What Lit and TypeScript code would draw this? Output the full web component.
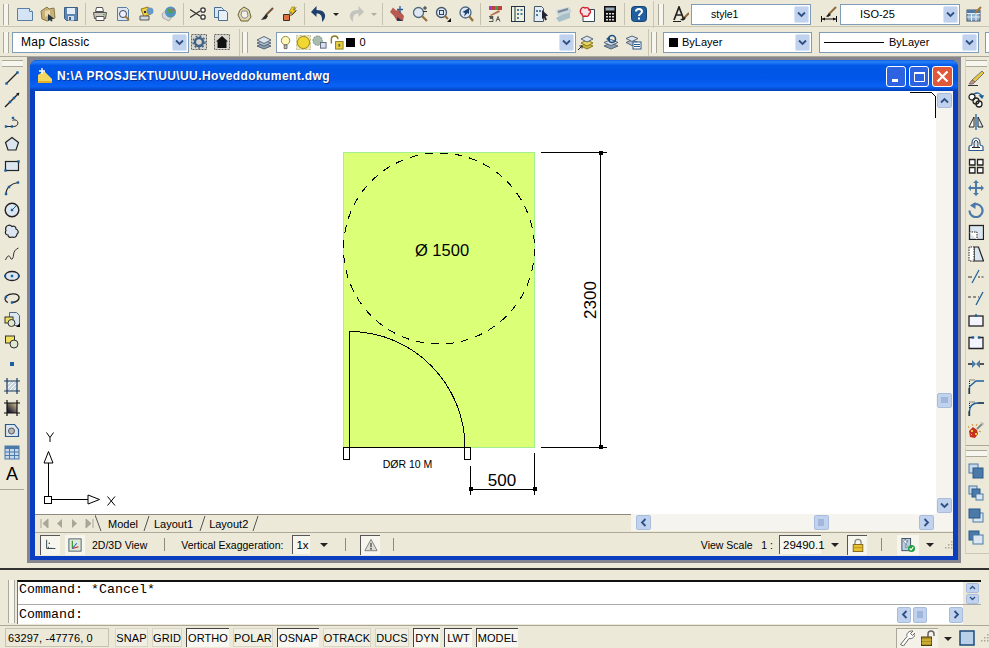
import { LitElement, html, css, svg } from "lit";
import { customElement } from "lit/decorators.js";

const D = "#1a5f9e";
const K = "#222";
const S = "#4b7aa8";
const dot = (x: number, y: number) => svg`<rect x=${x - 1.2} y=${y - 1.2} width="2.4" height="2.4" fill=${D} />`;

const icons: Record<string, any> = {
  // standard toolbar
  new: svg`<path d="M0.5 2.5h12l3 3v9h-15z" fill="#d5e4f4" stroke="#5a7fa5"/><path d="M12.5 2.500v3h3" fill="#fff" stroke="#5a7fa5"/>`,
  open: svg`<path d="M1 5l6-4 2 2 5-1 1 10-8 3-5-2z" fill="#c9b078" stroke="#8a7a4a"/><path d="M5 5l5-1v5l-5 2z" fill="#e8d9a8"/><path d="M8 8l6 4.500-2.500.5 1 2-1.500.5-1-2-2 1.500z" fill="#234"/>`,
  save: svg`<path d="M1.500 1.500h13v13h-11l-2-2z" fill="#5d86b5" stroke="#3c5f88"/><rect x="4" y="2" width="8" height="6" fill="#e4ecf5"/><rect x="5" y="10" width="6" height="4.500" fill="#d5dde8"/><rect x="6" y="11" width="2" height="3" fill="#3c5f88"/>`,
  print: svg`<path d="M4.500 1.500h6l1 4h-8z" fill="#fff" stroke="#555"/><path d="M1.500 6.500h13l-1 6h-11z" fill="#c8c8c0" stroke="#555"/><path d="M4 10.500h8v4H4z" fill="#fff" stroke="#555"/><circle cx="12" cy="8.500" r=".8" fill="#3a3"/>`,
  preview: svg`<path d="M2.500 1.500h9l2 2v11h-11z" fill="#dbe6f2" stroke="#5a7fa5"/><circle cx="8" cy="8" r="3.500" fill="#eef" stroke="#445"/><path d="M10.500 10.500l3.500 3.500" stroke="#a07a30" stroke-width="2"/>`,
  publish: svg`<path d="M3 3l7-2 3 7-7 3z" fill="#f0d040" stroke="#987a10"/><circle cx="12" cy="5" r="3.500" fill="#6a98c8"/><path d="M2 10h9v4H2z" fill="#d0d8e0" stroke="#555"/><rect x="6" y="5" width="2" height="2" fill="#333"/>`,
  web: svg`<path d="M1 8l7-6 6 4-6 9-6-3z" fill="#d8d8d8" stroke="#aaa"/><circle cx="9.500" cy="6" r="5.500" fill="#4f94c4"/><path d="M7 2.500l4 1 1 3-3 1-2-2zM8 9l2 1-1 1.500z" fill="#5aa04a"/><path d="M11 3l3 1.500" stroke="#d05030"/>`,
  cut: svg`<path d="M0 3.500l10 6.500M0 11.500L10 5" stroke="#333" stroke-width="1.300"/><circle cx="13" cy="4" r="2.200" fill="#fff" stroke="#333" stroke-width="1.300"/><circle cx="13" cy="11" r="2.200" fill="#fff" stroke="#333" stroke-width="1.300"/>`,
  copyc: svg`<path d="M1.500 1.500h7l2 2v8h-9z" fill="#dbe6f2" stroke="#4a6f95"/><path d="M5.500 4.500h7l2 2v8h-9z" fill="#e8eff7" stroke="#4a6f95"/>`,
  paste: svg`<path d="M8 1l5 3 2 7-3 4H5L2 9 4 4z" fill="#e0d8a8" stroke="#6a6238"/><path d="M6 5h5l1 5-2 2H7L5 9z" fill="#f3f1e2" stroke="#88a"/>`,
  brush: svg`<path d="M14 2L7 9" stroke="#70543a" stroke-width="2"/><path d="M7 8l2 2-2 3-5 1z" fill="#2a2a2a"/>`,
  match: svg`<path d="M1.500 8.500h6v6h-6z" fill="#e07040" stroke="#333"/><path d="M7 8.500l7-7M9.500 9.500l5-5" stroke="#444"/><path d="M10 1L7 6h3L8 10l6-6h-3l2-3z" fill="#f2d020" stroke="#8a7010" stroke-width=".6"/>`,
  undo: svg`<path d="M5.500 0L0 6l5.500 5V7.500c4 0 6 2 5.500 8.500 4-3 6-12-5.500-12z" fill="#1e3f6e"/>`,
  redo: svg`<path d="M10.500 0L16 6l-5.500 5V7.500c-4 0-6 2-5.500 8.500-4-3-6-12 5.500-12z" fill="#c4c4be"/>`,
  pan: svg`<path d="M1 6l4 4 3 5h6l1-5-5-6-3 .5-3-3z" fill="#b85a50"/><path d="M8 11l6 4H8z" fill="#203a5a"/><path d="M11 0v7M8 3.500h6" stroke="#2b5f94" stroke-width="1.300"/>`,
  zoomrt: svg`<circle cx="6.500" cy="6.500" r="5" fill="#dfe8f2" stroke="#506a80" stroke-width="1.300"/><path d="M10 10l5 5" stroke="#94703a" stroke-width="2.200"/><path d="M13 0v4M11 2h4M11 5.500h4" stroke="#333"/>`,
  zoomwin: svg`<circle cx="6.500" cy="6.500" r="5" fill="#dfe8f2" stroke="#456" stroke-width="1.300"/><rect x="4.500" y="4.500" width="4" height="4" fill="none" stroke="#246"/><path d="M10 10l3 3" stroke="#94703a" stroke-width="2.200"/><path d="M12 16h4v-4z" fill="#111"/>`,
  zoomprev: svg`<circle cx="7.500" cy="6.500" r="5.500" fill="#dfe8f2" stroke="#506a80" stroke-width="1.300"/><path d="M11 10l4 5" stroke="#94703a" stroke-width="2.200"/><path d="M11 2L4.500 6l2.500 1-1 3.500L9.500 7l1.500 1z" fill="#1f4270"/>`,
  props: svg`<rect x="2" y="0" width="13" height="4" fill="#c04040"/><rect x="2" y="0" width="3" height="4" fill="#a040c0"/><rect x="8" y="0" width="3" height="4" fill="#40a040"/><path d="M3 9l9-5 1 2-9 4z" fill="#b57050"/><path d="M2 10.500h4v1H3v1h3v3H2M9 15.500l2-5 2 5M10 13.500h2" fill="none" stroke="#333" stroke-width=".8"/>`,
  design: svg`<rect x="1.500" y="0.500" width="13" height="15" fill="#eef2e0" stroke="#234"/><path d="M5 0.500v15" stroke="#234"/><path d="M7 3h2v2H7zM10.500 3h2v2h-2zM7 7h2v2H7zM10.500 7h2v2h-2zM7 11h2v2H7z" fill="#5a7a9a"/>`,
  palette: svg`<path d="M1.500 0.500h7l2 2v13h-9.500z" fill="#e4ecf5" stroke="#456"/><path d="M3 4h2v2H3zM6 4h2v2H6zM3 8h2v2H3z" fill="#5a7a9a"/><path d="M9 4l6 5.500-2.500 1 1.500 3-2 1-1-3-2 1.500z" fill="#223"/>`,
  sheet: svg`<path d="M0 12l14-8v8L3 16z" fill="#a8c0c8"/><path d="M0 4l13-3 3 5L2 10z" fill="#c8d6dc"/><path d="M2 6l10-3" stroke="#789" stroke-width="2"/>`,
  markup: svg`<path d="M4 3.500h11.500v12H4z" fill="#fff" stroke="#345"/><path d="M2 3c1-2 3-2 4-1 2-1 4 0 4 2 2 0 2 3 0 4 0 2-2 3-4 2-1 1-3 0-3-2-2 0-2-4-1-5z" fill="#f6e2e2" stroke="#d02030" stroke-width="1.400"/>`,
  calc: svg`<rect x="2" y="0" width="12" height="16" fill="#111"/><rect x="3.500" y="1.500" width="9" height="3" fill="#9ab"/><path d="M4 7h2v1.500H4zM7 7h2v1.500H7zM10 7h2v1.500h-2zM4 10h2v1.500H4zM7 10h2v1.500H7zM10 10h2v1.500h-2zM4 13h2v1.500H4zM7 13h2v1.500H7zM10 13h2v1.500h-2z" fill="#ddd"/>`,
  help: svg`<rect x="0.500" y="0.500" width="15" height="15" rx="3" fill="#1f5f9f" stroke="#154070"/><path d="M5 5.500c0-3.500 6-3.500 6 0 0 2-3 2-3 4.500" fill="none" stroke="#fff" stroke-width="2"/><rect x="7" y="11.500" width="2" height="2" fill="#fff"/>`,
  textstyle: svg`<path d="M1 14L6 1l5 13M3 9h6" fill="none" stroke="#222" stroke-width="1.700"/><path d="M16 7l-5 5" stroke="#90683a" stroke-width="2"/><path d="M11 11l2 1-3 2.500-3-.5z" fill="#222"/><path d="M0 15.500h8" stroke="#222"/>`,
  dimstyle: svg`<path d="M.5 10v6M15.500 10v6M1 13h14" stroke="#111"/><path d="M1 13l3-1.500v3zM15 13l-3-1.500v3z" fill="#111"/><path d="M15 1L8 8" stroke="#90683a" stroke-width="2"/><path d="M8 7l2 2-3 2-2-.5z" fill="#222"/>`,
  tablestyle: svg`<rect x="1" y="4" width="13" height="11" fill="#8fb0d0" stroke="#456"/><path d="M1 7.500h13M1 11h13M5.500 4v11M10 4v11" stroke="#e8eff7"/><rect x="1" y="4" width="13" height="3" fill="#4a78a8"/><path d="M15 1L9 7" stroke="#a87a3a" stroke-width="2"/>`,
  // row 2
  wsgear: svg`<rect x="0.500" y="0.500" width="15" height="15" fill="#d8d8d0" stroke="#666" stroke-dasharray="2 1"/><circle cx="8" cy="8" r="4" fill="none" stroke="#3f5f85" stroke-width="2.400"/><circle cx="8" cy="8" r="6" fill="none" stroke="#3f5f85" stroke-width="1.400" stroke-dasharray="2 2"/>`,
  wshome: svg`<rect x="0.500" y="0.500" width="15" height="15" fill="#d8d8d0" stroke="#666" stroke-dasharray="2 1"/><path d="M8 2l6 5.500h-1.500V14h-9V7.500H2z" fill="#111"/>`,
  layers: svg`<path d="M8 9l7 3-7 3-7-3z" fill="#8a9ab0" stroke="#567"/><path d="M8 6l7 3-7 3-7-3z" fill="#b0bfd0" stroke="#567"/><path d="M8 2.500l7 3.500-7 3.500L1 6z" fill="#dce4ee" stroke="#567"/>`,
  bulb: svg`<circle cx="7" cy="6" r="4.500" fill="#fff8b8" stroke="#8a8040"/><path d="M5.500 10.500h3v4h-3z" fill="#bbb" stroke="#666"/>`,
  sun: svg`<rect x="0" y="0" width="16" height="16" fill="#e6e6c0" stroke="#a0a080" stroke-dasharray="2 2"/><circle cx="8" cy="8" r="6.500" fill="#f0d830" stroke="#987a10"/>`,
  plotlayer: svg`<circle cx="6" cy="6" r="5" fill="#aabbb0" stroke="#6a8a7a" stroke-dasharray="2 1"/><rect x="9" y="8" width="6" height="6" fill="#dde" stroke="#567"/>`,
  padlock: svg`<path d="M2.500 9V4.500a3.500 3.500 0 0 1 7 0" fill="none" stroke="#8a7a1a" stroke-width="1.500"/><rect x="7" y="7" width="8" height="8" fill="#e8d040" stroke="#8a7a1a"/><rect x="10" y="9.500" width="2" height="3" fill="#665"/>`,
  laycur: svg`<path d="M9 9l6 3-6 3-6-3z" fill="#c8b840" stroke="#887820"/><path d="M9 6l6 3-6 3-6-3z" fill="#e6d860" stroke="#887820"/><path d="M9 2l6 3-6 3-6-3z" fill="#dce4ee" stroke="#567"/><path d="M0 16l4-4M4 12v2.500M4 12H1.500" stroke="#222" fill="none"/>`,
  layprev: svg`<path d="M8 9l7 3-7 3-7-3z" fill="#8a9ab0" stroke="#567"/><path d="M8 5.500l7 3-7 3-7-3z" fill="#dce4ee" stroke="#567"/><circle cx="9" cy="5" r="3.500" fill="none" stroke="#1f4f80" stroke-width="1.600"/><path d="M3 5l4-3v5z" fill="#1f4f80"/>`,
  layst: svg`<path d="M6 6l6 2.500-6 3-6-3z" fill="#b0bfd0" stroke="#567"/><path d="M6 2l6 2.500-6 3-6-3z" fill="#dce4ee" stroke="#567"/><rect x="7" y="8" width="8" height="7" fill="#fff" stroke="#2a5a8a"/><path d="M8 10.500h6M8 12.500h6" stroke="#2a5a8a"/>`,
  // draw
  line: svg`<path d="M2.500 13.500l11-11" stroke=${K} stroke-width="1.200"/>${dot(2.5, 13.5)}${dot(13.5, 2.5)}`,
  xline: svg`<path d="M1 15L15 1" stroke=${K} stroke-width="1.400"/><path d="M12 1h3v3z" fill=${K}/>${dot(6, 10)}${dot(10, 6)}`,
  pline: svg`<path d="M2 12.500h7.500c4 0 5-3 4-5-1-2-4-2-5-1" fill="none" stroke=${K}/>${dot(2, 12.5)}${dot(8, 12.5)}${dot(9, 4)}`,
  polygon: svg`<path d="M8 1.500l6.500 5L12 14H4L1.500 6.500z" fill="#dce6f1" stroke=${K} stroke-width="1.200"/>`,
  rect: svg`<rect x="1.500" y="3.500" width="13" height="9" fill="#dce6f1" stroke=${K} stroke-width="1.200"/>${dot(14.5, 3.5)}${dot(1.5, 12.5)}`,
  arc: svg`<path d="M2 14C2 8 7 3.500 14 2.500" fill="none" stroke=${K} stroke-width="1.200"/>${dot(2, 14)}${dot(5, 7)}${dot(14, 2.5)}`,
  circle: svg`<circle cx="8" cy="8" r="6.800" fill="#dce6f1" stroke=${K} stroke-width="1.400"/><path d="M8 8l4-4" stroke=${D}/>${dot(8, 8)}`,
  cloud: svg`<path d="M4 1.500c2-1 3 0 4 1 2-1 4 0 4 2.500 2.500 1 3 4 1 5 0 3-3 4-5 3-2 1-4 0-4-2-3 0-3-3-2-4.500-1-2 0-4.500 2-5z" fill="#dce6f1" stroke=${K} stroke-width="1.200"/>`,
  spline: svg`<path d="M1.500 14c2-5 4-5 5-2s3 0 3-3 2-6 5-7" fill="none" stroke="#333"/>`,
  ellipse: svg`<ellipse cx="8" cy="8" rx="7" ry="4.500" fill="#dce6f1" stroke=${K} stroke-width="1.300"/>${dot(1, 8)}${dot(15, 8)}${dot(8, 8)}`,
  ellarc: svg`<path d="M4 12.500C1 11.500 0 8 2.500 6 6 3 14 3 15 7c.5 3-3 5.500-7 5.500" fill="none" stroke=${K} stroke-width="1.300"/>${dot(2, 7)}${dot(8, 12.5)}`,
  insert: svg`<path d="M5.500.5h7l3 3v10h-10z" fill="#dce6f1" stroke="#567"/><rect x="1" y="5" width="8" height="6" fill="#f0e060" stroke="#333"/><circle cx="7.500" cy="11" r="3.500" fill="#dfe8d0" stroke="#333"/><path d="M12 15h4v-4z" fill="#111"/>`,
  block: svg`<rect x="1.500" y="2" width="9" height="7" fill="#f0e060" stroke="#333"/><circle cx="10" cy="10" r="4" fill="#dfe8d0" stroke="#333"/>`,
  point: svg`<rect x="6" y="6" width="4" height="4" fill=${D}/>`,
  hatch: svg`<rect x="3" y="3" width="10" height="10" fill="#c8d4e0"/><path d="M3 7l4-4M3 11l8-8M5 13l8-8M9 13l4-4" stroke="#fff"/><path d="M0 3h16M0 13h16M3 0v16M13 0v16" stroke="#1a3a60" stroke-width="1.200"/>`,
  gradient: svg`<defs><linearGradient id="gr" x1="0" y1="1" x2="1" y2="0"><stop offset=".2" stop-color="#223"/><stop offset="1" stop-color="#d8c890"/></linearGradient></defs><rect x="3" y="3" width="10" height="10" fill="url(#gr)"/><path d="M0 3h16M0 13h16M3 0v16M13 0v16" stroke="#111" stroke-width="1.200"/>`,
  region: svg`<path d="M1.500 14.500v-12h9l4 5v7z" fill="#dce6f1" stroke="#2a5a8a" stroke-width="1.200"/><circle cx="7.500" cy="9" r="3" fill="#b8b8b8" stroke="#555"/>`,
  table: svg`<rect x="1" y="2" width="14" height="13" fill="#c9d8ea" stroke="#4b7aa8"/><rect x="1" y="2" width="14" height="3" fill="#4b7aa8"/><path d="M1 8h14M1 11.500h14M5.500 5v10M10.500 5v10" stroke="#4b7aa8"/>`,
  // modify
  erase: svg`<path d="M14 1l2 2-9 9-3-2z" fill="#e8c840" stroke="#777"/><path d="M4 10l3 2-2 2H1z" fill="#d08a80" stroke="#777"/><path d="M0 15.500h10" stroke="#333"/>`,
  copyo: svg`<circle cx="4" cy="5" r="3" fill="#fff" stroke=${K} stroke-width="1.300"/><circle cx="11" cy="12" r="3" fill="#fff" stroke=${K} stroke-width="1.300"/><circle cx="8" cy="9" r="3" fill="none" stroke=${K} stroke-width="1.300"/><path d="M6 2c3-2 7-1 8 3M14 6l-2-2h3z" fill="none" stroke=${D} stroke-width="1.300"/>`,
  mirror: svg`<path d="M6 3v10H1z" fill="#fff" stroke=${K}/><path d="M10 3v10h5z" fill="#dce6f1" stroke=${K}/><path d="M8 0v16" stroke=${D} stroke-width="1.300"/>`,
  offset: svg`<path d="M1 14.500V11c0-1 1-1.500 2-1.500s1-1 1-2C4 4 6 2 8 2s4 2 4 5.500c0 1 0 2 1 2s2 .5 2 1.500v3.500z" fill="#fff" stroke="#2a5a8a" stroke-width="1.200"/><path d="M4 11.500c3 0 2-2 2-4C6 5 7 4.500 8 4.500S10 5 10 7.500c0 2-1 4 2 4z" fill="#dce6f1" stroke=${K}/>`,
  array: svg`<path d="M1.500 1.500H7V7H1.500zM9.500 1.500H15V7H9.500zM1.500 9.500H7V15H1.500zM9.500 9.500H15V15H9.500z" fill="#fff" stroke=${K} stroke-width="1.300"/>`,
  move: svg`<path d="M8 0l3 3H9v4h4V5l3 3-3 3V9H9v4h2l-3 3-3-3h2V9H3v2L0 8l3-3v2h4V3H5z" fill=${S}/>`,
  rotate: svg`<path d="M4 3.500a6.500 6.500 0 1 1-2.500 5" fill="none" stroke=${S} stroke-width="2.200"/><path d="M7.500 0v7L2 3.500z" fill=${S}/>`,
  scale: svg`<rect x="1.500" y="1.500" width="14" height="14" fill="#dce6f1" stroke=${K} stroke-width="1.300"/><path d="M1 8h8v7.500" fill="#fff" stroke=${K} stroke-dasharray="1.500 1"/>`,
  stretch: svg`<path d="M6 1h4.500l5 14H6z" fill="#dce6f1" stroke=${K} stroke-width="1.200"/><path d="M1 1v14h5V1z" fill="#fff" stroke=${K} stroke-dasharray="1.500 1"/>`,
  trim: svg`<path d="M0 9h4" stroke="#333"/><path d="M10 9h6" stroke="#333" stroke-dasharray="2 1.500"/><path d="M4 15l7-13" stroke=${D} stroke-width="1.200"/>`,
  extend: svg`<path d="M0 7h11" stroke="#333" stroke-dasharray="3 2"/><path d="M8 15l7-13" stroke=${D} stroke-width="1.300"/>`,
  brkpt: svg`<rect x="1" y="4" width="14" height="10" fill="#f4f4ff" stroke=${K} stroke-width="1.300"/>${dot(8, 3.5)}`,
  brk: svg`<path d="M5 3.500H1v11h14v-11h-4" fill="#f4f4ff" stroke=${K} stroke-width="1.300"/>${dot(5, 3.5)}${dot(11, 3.5)}`,
  join: svg`<path d="M0 8h5M11 8h5" stroke=${K} stroke-width="1.400"/><path d="M4 4l4 4-4 4zM12 4L8 8l4 4z" fill=${S}/>`,
  chamfer: svg`<path d="M1.500 16V8.500L8 3h8" fill="none" stroke=${D} stroke-width="1.300"/><path d="M1.500 8V2h5" fill="none" stroke=${K} stroke-dasharray="1 1"/><path d="M1 16v-6" stroke=${K}/>`,
  fillet: svg`<path d="M1.500 16v-5C1.500 6 5 3 10 3h6" fill="none" stroke=${D} stroke-width="1.400"/><path d="M1.500 8V2h5" fill="none" stroke=${K} stroke-dasharray="1 1"/><path d="M1 16v-5M10 3h6" stroke=${K}/>`,
  explode: svg`<path d="M1 9l4-4 4 3 1 4-3 4-5-1z" fill="#c83020"/><path d="M3 8h2v2H3zM7 11h2v2H7zM3 12h1v1H3z" fill="#f0d030"/><path d="M9 7l5-5" stroke="#888" stroke-width="2"/><path d="M1 6L0 4M5 4L4 2M11 9l2 1M8 4l1-2" stroke="#d09030"/><path d="M12 0l4 1-1 3z" fill="#bbb"/>`,
  ordera: svg`<rect x="1" y="1" width="9" height="9" fill="#c9d8ea" stroke=${S}/><rect x="5" y="5" width="10" height="10" fill=${S} stroke="#2a5a8a"/>`,
  orderb: svg`<rect x="1" y="1" width="8" height="8" fill="#c9d8ea" stroke=${S}/><rect x="4" y="4" width="8" height="8" fill=${S} stroke="#2a5a8a"/><rect x="8" y="9" width="7" height="6" fill="#dce6f1" stroke=${S}/>`,
  orderc: svg`<rect x="5" y="6" width="10" height="9" fill="#dce6f1" stroke=${S}/><rect x="1" y="2" width="11" height="9" fill=${S} stroke="#2a5a8a"/>`,
  orderd: svg`<rect x="1" y="2" width="10" height="9" fill=${S} stroke="#2a5a8a"/><rect x="5" y="6" width="10" height="9" fill="#dce6f1" stroke=${S}/>`,
  // status
  ucsgrid: svg`<path d="M3 2v10h10" fill="none" stroke="#234"/><path d="M5 12v-2M8 12v-1" stroke="#234"/><circle cx="6" cy="6" r=".8" fill="#234"/>`,
  view3d: svg`<rect x="1" y="1" width="14" height="14" fill="#dde8d8" stroke="#456"/><path d="M5 12V3" stroke="#3a9a3a" stroke-width="1.400"/><path d="M5 12l7-2" stroke="#c03030" stroke-width="1.400"/><path d="M5 12l5-6" stroke="#3a5ac0" stroke-width="1.200"/>`,
  warn: svg`<path d="M8 1.500l7 13H1z" fill="#e0dfd6" stroke="#777"/><path d="M8 5.500v5" stroke="#555" stroke-width="1.600"/><rect x="7" y="11.500" width="2" height="1.800" fill="#555"/>`,
  lock: svg`<path d="M4.500 8V5a3.500 3.500 0 0 1 7 0v3" fill="none" stroke="#888" stroke-width="1.500"/><rect x="2.500" y="7.500" width="11" height="8" fill="#e8c030" stroke="#7a6010"/><path d="M2.500 11h11" stroke="#b89020"/>`,
  tray: svg`<rect x="1" y="0.500" width="10" height="14" fill="#b8cfe4" stroke="#345"/><path d="M5 1l1 3 2-1-2 3 1 5H5V6L3 4z" fill="#fff" stroke="#234" stroke-width=".5"/><circle cx="12" cy="12" r="4" fill="#20a040"/><path d="M10 12l1.500 1.500 2.500-3" fill="none" stroke="#fff" stroke-width="1.300"/>`,
  wrench: svg`<path d="M1.500 14.500L8 6.500c-1-3 2-6 6-5.500l-2.500 2.500 2 2L16 3c.5 3.500-3 6.500-6 5.500l-5.500 7.500z" fill="#fff" stroke="#666"/>`,
  openlock: svg`<path d="M8 7V4a3 3 0 0 1 6 0v2" fill="none" stroke="#666" stroke-width="1.500"/><rect x="1.500" y="7" width="10" height="8.500" fill="#b09020" stroke="#504010"/><path d="M1.500 10h10M1.500 13h10" stroke="#e0c850"/>`,
  clean: svg`<rect x="1" y="1" width="14" height="14" fill="#b8d0e8" stroke="#1e4a78" stroke-width="1.500"/>`,
  doc: svg`<path d="M1 15V7l6-4 8 8v4z" fill="#f4d860"/><path d="M1 15h14v-2H1z" fill="#e8b020"/><path d="M5 0v6M2 3h6" stroke="#fff" stroke-width="1.400"/>`,
};

const ic = (n: string, cls = "") => html`<svg class="ic ${cls}" viewBox="0 0 16 16">${icons[n]}</svg>`;
const b = (n: string, cls = "") => html`<span class="b ${cls}">${ic(n)}</span>`;
const chev = html`<svg class="chev" viewBox="0 0 9 7"><path d="M1 1.500l3.500 3.500L8 1.500" fill="none" stroke="#2d4f84" stroke-width="1.800"/></svg>`;
const drop = html`<span class="drop">${chev}</span>`;

const leftTools = ["line","xline","pline","polygon","rect","arc","circle","cloud","spline","ellipse","ellarc","insert","block","point","hatch","gradient","region","table"];
const modifyTools = ["erase","copyo","mirror","offset","array","move","rotate","scale","stretch","trim","extend","brkpt","brk","join","chamfer","fillet","explode"];
const orderTools = ["ordera","orderb","orderc","orderd"];
const statusBtns: [string, number, boolean][] = [
  ["SNAP", 33, false], ["GRID", 30, false], ["ORTHO", 43, true], ["POLAR", 40, false], ["OSNAP", 42, true],
  ["OTRACK", 48, false], ["DUCS", 34, false], ["DYN", 27, true], ["LWT", 28, true], ["MODEL", 42, true],
];

@customElement("app-root")
export class AppRoot extends LitElement {
  static styles = css`
    :host {
      display: block;
      width: 989px;
      height: 648px;
      overflow: hidden;
      background: #ece9d8;
      font-family: "Liberation Sans", Arial, sans-serif;
      font-size: 11px;
      color: #000;
    }
    .ic { width: 16px; height: 16px; display: block; flex: none; }
    .row1, .row2 { display: flex; align-items: center; box-sizing: border-box; }
    .row1 { height: 27px; border-bottom: 1px solid #c9c6b4; padding-top: 2px; }
    .row2 { height: 30px; border-bottom: 1px solid #aca899; padding: 2px 0 1px; }
    .grip {
      width: 4px; height: 21px; flex: none;
      border-left: 1px solid #aca899; border-right: 1px solid #aca899;
      background: #f6f5ee;
    }
    .g1 { margin: 0 4px 0 3px; }
    .g1b { margin-left: 4px; }
    .g2 { margin: 0 3px 0 3px; }
    .g3 { margin-left: 2px; }
    .g4 { margin: 0 6px 0 2px; }
    .b { width: 23px; height: 22px; display: flex; align-items: center; justify-content: center; flex: none; }
    .b.w24 { width: 24px; }
    .b.tiny { width: 10px; }
    .b.mod { margin-left: 3px; }
    .b.mod2 { margin-left: 1px; }
    .b.m5 { margin-left: 5px; }
    .b.m6 { margin-left: 6px; }
    .b.n2 { margin-left: -2px; }
    .b.p2 { margin-left: 2px; }
    .b.lay { margin-left: 4px; width: 24px; }
    .sep { width: 6px; height: 22px; flex: none; display: flex; justify-content: center; }
    .sep::after { content: ""; width: 1px; background: #c5c2b0; }
    .arrow { width: 0; height: 0; border-left: 3px solid transparent; border-right: 3px solid transparent; border-top: 3px solid #222; flex: none; }
    .arrow.off { border-top-color: #b0ae9f; }
    .arrow.big { border-width: 4px 4px 0; }
    .end { width: 1px; height: 27px; background: #c9c6b4; margin-left: 3px; flex: none; }
    .end.e6 { margin-left: 6px; }

    .combo {
      height: 21px; box-sizing: border-box; flex: none;
      display: flex; align-items: center; gap: 4px;
      background: #fff; border: 1px solid #7f9db9; padding: 0 1px 0 9px;
      white-space: nowrap; overflow: hidden;
    }
    .combo .txt { flex: 1; overflow: hidden; }
    .drop {
      width: 15px; height: 17px; flex: none; border-radius: 2px; background: #c1d2ee;
      border: 1px solid #d8e4f8; box-sizing: border-box;
      display: flex; align-items: center; justify-content: center;
    }
    .chev { width: 9px; height: 7px; display: block; }
    .c-style { width: 120px; margin-left: -1px; padding-left: 19px; font-size: 10.5px; }
    .c-dim { width: 120px; margin: 0 6px 0 0; padding-left: 19px; }
    .c-ws { width: 177px; padding-left: 8px; font-size: 12px; letter-spacing: .3px; }
    .c-layer { width: 300px; padding-left: 2px; gap: 2px; }
    .c-color { width: 149px; padding-left: 4px; margin-right: 7px; }
    .c-line { width: 160px; padding-left: 4px; margin-right: 6px; gap: 5px; }
    .c-last { width: 20px; border-right: none; }
    .ln { width: 60px; height: 1px; background: #000; flex: none; }
    .sw { width: 9px; height: 9px; background: #000; flex: none; margin-left: 1px; }
    .mini { display: flex; flex: 1; gap: 1.5px; align-items: center; }
    .zero { margin-left: 3px; }
    .c-layer .ic { width: 15px; height: 15px; }

    .main { display: flex; height: 506px; }
    .tools {
      display: flex; flex-direction: column; align-items: center; flex: none; align-self: flex-start;
      box-sizing: border-box;
    }
    .tools .t { height: 22px; display: flex; align-items: center; justify-content: center; flex: none; }
    .tools .t.letter { font-size: 18px; line-height: 22px; }
    .tgrip { width: 21px; height: 5px; border-top: 1px solid #aca899; border-bottom: 1px solid #aca899; background: #f6f5ee; margin: 3px 0 0; flex: none; }
    .left { width: 24px; height: 433px; border-bottom: 1px solid #aca899; margin-right: 3px; }
    .right-col { width: 24px; margin-left: 4px; display: flex; flex-direction: column; flex: none; }
    .right-col .tools { width: 24px; border-left: 1px solid #d4d1c0; padding-right: 3px; }
    .modify { height: 389px; border-bottom: 1px solid #aca899; }
    .order { margin-top: 1px; height: 107px; border-bottom: 1px solid #c9c6b4; }
    .order .tgrip { margin: 3px 0 3px; }

    .mdi { width: 934px; flex: none; background: #85858f; box-sizing: border-box; padding: 3px; }
    .win {
      height: 500px; box-sizing: border-box; display: flex; flex-direction: column;
      background: #0a3dc0; border-radius: 7px 7px 0 0; padding: 0 5px 4px 5px;
    }
    .title {
      height: 31px; flex: none; margin: 0 -5px; padding: 4px 5px 3px 7px; box-sizing: border-box;
      display: flex; align-items: center; gap: 3px; border-radius: 7px 7px 0 0;
      background: linear-gradient(#0a5fe8 0%, #2a80f8 6%, #0058e6 18%, #0055e8 60%, #0a62f4 85%, #0040b8 100%);
    }
    .title .cap {
      color: #fff; font-weight: bold; font-size: 12px; letter-spacing: .4px; flex: 1;
      text-shadow: 1px 1px 0 #0a2f90; white-space: nowrap;
      padding-left: 1px;
    }
    .wb {
      width: 20px; height: 21px; box-sizing: border-box;
      border: 1px solid #fff; border-radius: 3px; background: #2d62e0;
      display: flex; align-items: center; justify-content: center; flex: none;
    }
    .wb.x { background: #e0583a; width: 21px; }
    .wb svg { width: 15px; height: 15px; display: block; }
    .client { flex: 1; display: flex; flex-direction: column; background: #ece9d8; min-height: 0; }
    .draw-row { height: 423px; display: flex; flex: none; background: #fff; }
    .draw { width: 901px; height: 423px; display: block; flex: none; background: #fff; }
    .draw path, .draw circle, .draw rect { shape-rendering: crispEdges; }
    .draw .smooth { shape-rendering: auto; }
    .vs {
      flex: 1; background: #f5f4ef; display: flex; flex-direction: column; align-items: center;
      justify-content: space-between; padding: 2px 0 1px; position: relative;
    }
    .sb {
      width: 15px; height: 15px; box-sizing: border-box; border-radius: 2px; flex: none;
      background: #c1d2ee; border: 1px solid #e4ecfa; outline: 1px solid #a9bcdc; outline-offset: -1px;
      display: flex; align-items: center; justify-content: center;
    }
    .sb svg { width: 9px; height: 7px; }
    .sb .ar { width: 7px; height: 9px; }
    .vs .thumb { position: absolute; top: 302px; left: 1px; }
    .tabs { height: 18px; flex: none; display: flex; border-top: 1px solid #8d8b80; box-sizing: border-box; }
    .nav { display: flex; align-items: center; width: 60px; padding-left: 4px; gap: 4px; box-sizing: border-box; flex: none; }
    .nav svg { width: 11px; height: 11px; display: block; }
    .tab-strip { width: 200px; height: 17px; display: flex; align-items: center; flex: none; position: relative; }
    .tab-strip svg { position: absolute; left: 0; top: 0; width: 200px; height: 17px; }
    .tab { position: relative; margin-left: 16px; }
    .tab:first-of-type { margin-left: 13px; }
    .hs {
      margin-left: auto; width: 322px; height: 17px; background: #f5f4ef; margin-top: -1px; display: flex; align-items: center;
      position: relative; box-sizing: border-box; padding: 0 19px 0 5px; justify-content: space-between; flex: none;
    }
    .hs .thumb { position: absolute; left: 183px; top: 1px; }
    .wstat {
      flex: 1; display: flex; align-items: center; border-top: 1px solid #aca899; background: #ece9d8;
      padding: 0 0 0 5px; font-size: 10.5px; white-space: nowrap;
    }
    .pb { width: 20px; height: 20px; box-sizing: border-box; display: flex; align-items: center; justify-content: center; flex: none; }
    .pb.in { border-left: 1px solid #555; border-top: 1px solid #555; background: #f6f5ee; }
    .pb.soft { background: #f6f5ee; }
    .pb.wide { width: 22px; }
    .pb .ic { width: 14px; height: 14px; }
    .vb { width: 1px; height: 13px; background: #8d8b80; flex: none; }
    .inbox {
      height: 19px; box-sizing: border-box; border-left: 1px solid #555; border-top: 1px solid #555;
      background: #f6f5ee; display: flex; align-items: center; padding-left: 3px; flex: none; font-size: 11.5px;
    }
    .ml5 { margin-left: 5px; } .ml6 { margin-left: 6px; } .ml7 { margin-left: 7px; } .ml8 { margin-left: 8px; }
    .ml9 { margin-left: 9px; } .ml10 { margin-left: 10px; } .ml13 { margin-left: 13px; } .ml14 { margin-left: 14px; }
    .ml15 { margin-left: 15px; } .ml16 { margin-left: 16px; } .ml17 { margin-left: 17px; } .ml18 { margin-left: 18px; }
    .mla { margin-left: auto; }
    .w18 { width: 18px; } .w42 { width: 42px; }

    .cmd { margin-top: 5px; height: 57px; box-sizing: border-box; border-top: 2px solid #333; padding: 10px 0 0 8px; display: flex; align-items: flex-start; }
    .vgrip { width: 5px; height: 43px; border-left: 1px solid #aca899; border-right: 1px solid #aca899; background: #f6f5ee; flex: none; margin-right: 2px; }
    .cbox { width: 964px; border-top: 2px solid #111; border-left: 1px solid #777; height: 44px; box-sizing: border-box; display: flex; flex-direction: column; flex: none; }
    .cline { display: flex; align-items: center; font: 13.33px/1 "Liberation Mono", "Courier New", monospace; }
    .cline .ct { flex: 1; background: #fff; height: 100%; box-sizing: border-box; display: flex; align-items: center; padding-left: 1px; white-space: pre; }
    .c1 { height: 22px; border-bottom: 1px solid #aaa; }
    .c1 .ct { padding-bottom: 6px; }
    .c2 { flex: 1; }
    .cside { width: 17px; display: flex; flex-direction: column; gap: 1px; align-items: center; margin-left: 1px; }
    .cside .sb { width: 13px; height: 10px; }
    .cside .sb svg { width: 7px; height: 5px; }
    .hs2 { width: 69px; background: #fff; height: 100%; display: flex; align-items: center; padding-left: 3px; box-sizing: border-box; flex: none; gap: 2px; }
    .hs2 .sb { width: 14px; height: 16px; }
    .hs2 .sp { flex: 1; }
    .tail { width: 18px; flex: none; }

    .stat { height: 23px; border-top: 1px solid #aca899; box-sizing: border-box; padding: 1px 0 0 5px; display: flex; align-items: center; font-size: 11px; letter-spacing: .1px; }
    .coord { width: 104px; height: 19px; box-sizing: border-box; border: 1px solid #c5c2b0; display: flex; align-items: center; padding-left: 2px; margin-right: 6px; flex: none; }
    .btns { display: flex; gap: 4px; }
    .sbtn { height: 19px; box-sizing: border-box; display: flex; align-items: center; justify-content: center; flex: none; border: 1px solid #d8d5c4; background: #f1efe3; }
    .sbtn.on { border: none; border-left: 1px solid #444; border-top: 1px solid #444; background: #f8f7f1; }
    .tray { margin-left: auto; display: flex; align-items: center; }
    .trbox { width: 42px; height: 20px; display: flex; align-items: center; justify-content: space-around; background: #f4f2e8; border-left: 1px solid #aca899; border-top: 1px solid #aca899; box-sizing: border-box; }
    .tray .arrow { margin: 3px 7px 0 6px; }
    .tray .clean { margin-right: 4px; }
    .dots { width: 10px; height: 10px; flex: none; display: block; }
    .dots.d9 { margin-left: 9px; }
  `;

  tools(names: string[]) {
    return names.map((n) => html`<span class="t">${ic(n)}</span>`);
  }

  topBars() {
    return html`
      <div class="row1">
        <span class="grip g1"></span>
        ${b("new")}${b("open")}${b("save")}<span class="sep"></span>
        ${b("print")}${b("preview")}${b("publish")}${b("web")}<span class="sep"></span>
        ${b("cut")}${b("copyc")}${b("paste")}${b("brush")}${b("match")}<span class="sep"></span>
        ${b("undo", "w24")}<span class="b tiny"><i class="arrow"></i></span>
        ${b("redo", "w24 mod")}<span class="b tiny mod2"><i class="arrow off"></i></span><span class="sep"></span>
        ${b("pan")}${b("zoomrt")}${b("zoomwin")}${b("zoomprev")}<span class="sep"></span>
        ${b("props")}${b("design")}${b("palette")}${b("sheet")}${b("markup")}${b("calc")}<span class="sep"></span>
        ${b("help")}
        <span class="end"></span>
        <span class="grip g1b"></span>
        ${b("textstyle", "m5")}
        <div class="combo c-style"><span class="txt">style1</span>${drop}</div>
        ${b("dimstyle", "m6")}
        <div class="combo c-dim"><span class="txt">ISO-25</span>${drop}</div>
        ${ic("tablestyle")}
      </div>
      <div class="row2">
        <span class="grip g2"></span>
        <div class="combo c-ws"><span class="txt">Map Classic</span>${drop}</div>
        ${b("wsgear", "n2")}${b("wshome")}
        <span class="end e6"></span>
        <span class="grip g3"></span>
        ${b("layers", "lay")}
        <div class="combo c-layer">
          <span class="mini">${ic("bulb")}${ic("sun")}${ic("plotlayer")}${ic("padlock")}<i class="sw"></i><span class="zero">0</span></span>
          ${drop}
        </div>
        ${b("laycur", "n2")}${b("layprev", "p2")}${b("layst")}
        <span class="end"></span>
        <span class="grip g4"></span>
        <div class="combo c-color"><i class="sw"></i><span class="txt">ByLayer</span>${drop}</div>
        <div class="combo c-line"><i class="ln"></i><span class="txt">ByLayer</span>${drop}</div>
        <div class="combo c-last"></div>
      </div>
    `;
  }

  drawing() {
    const sq = (x: number, y: number) => svg`<rect x=${x - 2} y=${y - 2} width="4" height="4" fill="#000"/>`;
    return html`
      <svg class="draw" viewBox="35 91 901 423" font-family="Liberation Sans, Arial, sans-serif">
        <rect x="343.5" y="152.5" width="191" height="295" fill="#dcff78" stroke="#a5f08c"/>
        <circle cx="439" cy="248.5" r="95.5" fill="none" stroke="#000" stroke-dasharray="8 7"/>
        <text x="442" y="256" text-anchor="middle" font-size="16.5">Ø 1500</text>
        <path d="M349.5 447V331.5C414 331.500 465 385 465 447" fill="none" stroke="#000"/>
        <path d="M343 447.5H470" stroke="#000"/>
        <rect x="343.5" y="447.5" width="6" height="12" fill="#fff" stroke="#000"/>
        <rect x="464.5" y="447.5" width="6" height="12" fill="#fff" stroke="#000"/>
        <text x="407.5" y="468" text-anchor="middle" font-size="10.5">DØR 10 M</text>
        <path d="M541 152.5H607M541 447.5H607M600.5 153V447" stroke="#000" fill="none"/>
        ${sq(600.5, 153)}${sq(600.5, 447)}
        <text transform="translate(596 300) rotate(-90)" text-anchor="middle" font-size="17">2300</text>
        <path d="M470.5 466V495M534.5 453V495M470 489.5H535" stroke="#000" fill="none"/>
        ${sq(471, 489)}${sq(534.5, 489)}
        <text x="502" y="486" text-anchor="middle" font-size="17">500</text>
        <path d="M910 92.5H932M935.5 96V118" stroke="#000" fill="none"/>
        <path class="smooth" d="M932 93l3 3" stroke="#000" fill="none"/>
        <path d="M48.5 496V463M52 499.5H88" stroke="#000" fill="none"/>
        <rect x="44.5" y="496.5" width="7" height="7" fill="#fff" stroke="#000"/>
        <path class="smooth" d="M48.5 451.5L53 463H44z" fill="#fff" stroke="#000"/>
        <path class="smooth" d="M99.5 499.5L88 495V504z" fill="#fff" stroke="#000"/>
        <path class="smooth" d="M46.5 432.5L50 437.5L53.5 432.5M50 437.5V442" stroke="#000" fill="none"/>
        <path class="smooth" d="M107.5 496.5L115 505.5M115 496.5L107.5 505.5" stroke="#000" fill="none"/>
      </svg>
    `;
  }

  tabStrip() {
    return html`
      <div class="tab-strip">
        <svg viewBox="0 0 200 17"><path d="M0 0l6 16M49 16l5-15M105 16l5-15M158 16l5-15" fill="none" stroke="#555"/></svg>
        <span class="tab">Model</span>
        <span class="tab">Layout1</span>
        <span class="tab">Layout2</span>
      </div>
    `;
  }

  render() {
    const up = html`<svg viewBox="0 0 9 7"><path d="M1 5.500L4.500 2 8 5.500" fill="none" stroke="#2d4f84" stroke-width="1.800"/></svg>`;
    const thumbH = html`<svg viewBox="0 0 9 7"><path d="M1 1h7M1 3h7M1 5h7" stroke="#7f9bc8"/></svg>`;
    const thumbV = html`<svg viewBox="0 0 9 7"><path d="M2 0v7M4 0v7M6 0v7" stroke="#7f9bc8"/></svg>`;
    const lft = html`<svg class="ar" viewBox="0 0 7 9"><path d="M5.500 1L2 4.500 5.500 8" fill="none" stroke="#2d4f84" stroke-width="1.800"/></svg>`;
    const rgt = html`<svg class="ar" viewBox="0 0 7 9"><path d="M1.500 1L5 4.500 1.500 8" fill="none" stroke="#2d4f84" stroke-width="1.800"/></svg>`;
    const grey = "#a8a698";
    const dotPath = "M8 1h1.500v1.500H8zM5 4h1.500v1.500H5zM8 4h1.500v1.500H8zM2 7h1.500v1.500H2zM5 7h1.500v1.500H5zM8 7h1.500v1.500H8z";
    return html`
      ${this.topBars()}
      <div class="main">
        <div class="tools left">
          <span class="tgrip"></span>
          ${this.tools(leftTools)}
          <span class="t letter">A</span>
        </div>
        <div class="mdi">
          <div class="win">
            <div class="title">
              ${ic("doc")}
              <span class="cap">N:\\A PROSJEKT\\UU\\UU.Hoveddokument.dwg</span>
              <span class="wb"><svg viewBox="0 0 15 15"><rect x="3" y="10" width="6" height="3" fill="#fff"/></svg></span>
              <span class="wb"><svg viewBox="0 0 15 15"><path d="M2.500 3.500h10v9h-10z" fill="none" stroke="#fff"/><path d="M2 3h11v2H2z" fill="#fff"/></svg></span>
              <span class="wb x"><svg viewBox="0 0 15 15"><path d="M2.500 2.500l10 10M12.500 2.500l-10 10" stroke="#fff" stroke-width="2.200"/></svg></span>
            </div>
            <div class="client">
              <div class="draw-row">
                ${this.drawing()}
                <div class="vs">
                  <span class="sb">${up}</span>
                  <span class="sb thumb">${thumbH}</span>
                  <span class="sb">${chev}</span>
                </div>
              </div>
              <div class="tabs">
                <div class="nav">
                  <svg viewBox="0 0 11 11"><path d="M2 1v9M9 1L4 5.500 9 10z" fill=${grey} stroke=${grey}/></svg>
                  <svg viewBox="0 0 11 11"><path d="M8 1L3 5.500 8 10z" fill=${grey}/></svg>
                  <svg viewBox="0 0 11 11"><path d="M3 1l5 4.500L3 10z" fill=${grey}/></svg>
                  <svg viewBox="0 0 11 11"><path d="M9 1v9M2 1l5 4.500L2 10z" fill=${grey} stroke=${grey}/></svg>
                </div>
                ${this.tabStrip()}
                <div class="hs">
                  <span class="sb">${lft}</span>
                  <span class="sb thumb">${thumbV}</span>
                  <span class="sb">${rgt}</span>
                </div>
              </div>
              <div class="wstat">
                <span class="pb in">${ic("ucsgrid")}</span>
                <span class="pb soft ml5">${ic("view3d")}</span>
                <span class="ml7">2D/3D View</span>
                <i class="vb ml17"></i>
                <span class="ml16">Vertical Exaggeration:</span>
                <span class="inbox ml9 w18">1x</span>
                <i class="arrow big ml10"></i>
                <i class="vb ml17"></i>
                <span class="pb in ml14">${ic("warn")}</span>
                <i class="vb ml13"></i>
                <span class="mla">View Scale&nbsp;&nbsp;&nbsp;1 :</span>
                <span class="inbox ml6 w42">29490.1</span>
                <i class="arrow big ml10"></i>
                <span class="pb in ml8">${ic("lock")}</span>
                <i class="vb ml14"></i>
                <span class="pb soft wide ml15">${ic("tray")}</span>
                <i class="arrow big ml7"></i>
                <svg class="dots d9" viewBox="0 0 10 10"><path d=${dotPath} fill="#aca899"/></svg>
              </div>
            </div>
          </div>
        </div>
        <div class="right-col">
          <div class="tools modify">
            <span class="tgrip"></span>
            ${this.tools(modifyTools)}
          </div>
          <div class="tools order">
            <span class="tgrip"></span>
            ${this.tools(orderTools)}
          </div>
        </div>
      </div>
      <div class="cmd">
        <span class="vgrip"></span>
        <div class="cbox">
          <div class="cline c1">
            <span class="ct">Command: *Cancel*</span>
            <div class="cside"><span class="sb">${up}</span><span class="sb">${chev}</span></div>
          </div>
          <div class="cline c2">
            <span class="ct">Command:</span>
            <div class="hs2"><span class="sb">${lft}</span><span class="sb">${thumbV}</span><span class="sp"></span><span class="sb">${rgt}</span></div>
            <span class="tail"></span>
          </div>
        </div>
      </div>
      <div class="stat">
        <span class="coord">63297, -47776, 0</span>
        <div class="btns">
          ${statusBtns.map(([t, w, on]) => html`<span class="sbtn ${on ? "on" : ""}" style="width:${w}px">${t}</span>`)}
        </div>
        <div class="tray">
          <span class="trbox">${ic("wrench")}${ic("openlock")}</span>
          <i class="arrow big"></i>
          ${ic("clean", "clean")}
          <svg class="dots" viewBox="0 0 10 10"><path d=${dotPath} fill="#aca899"/></svg>
        </div>
      </div>
    `;
  }
}
